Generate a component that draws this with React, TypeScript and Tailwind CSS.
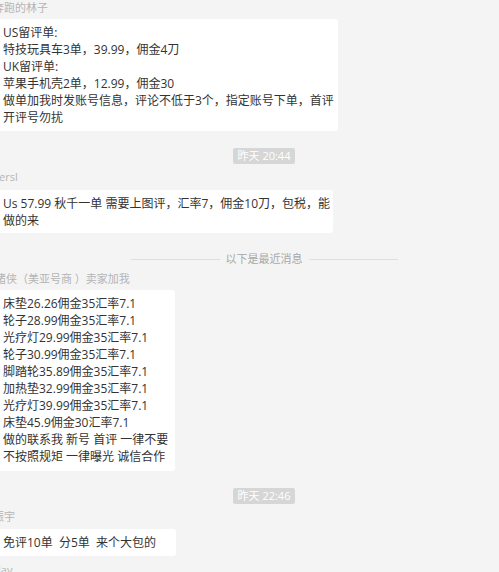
import React from "react";

const font = { fontFamily: '"Open Sans", "Noto Sans CJK SC", sans-serif' };

function Name({ children, className = "" }: { children: React.ReactNode; className?: string }) {
  return (
    <div className={`h-4 text-[11px] leading-4 text-[#b4b4b4] whitespace-nowrap ${className}`}>{children}</div>
  );
}

function Bubble({ lines, className = "" }: { lines: string[]; className?: string }) {
  return (
    <div className={`bg-white rounded-r-[3px] pl-[3px] text-[12px] leading-[17px] text-[#333] whitespace-pre ${className}`}>
      {lines.map((l, i) => (
        <div key={i}>{l}</div>
      ))}
    </div>
  );
}

function Stamp({ text, className = "" }: { text: string; className?: string }) {
  return (
    <div className={`flex justify-center w-[528px] ${className}`}>
      <div className="h-4 w-[62px] bg-[#d6d6d6] rounded-[2px] text-[11px] leading-4 text-white text-center">{text}</div>
    </div>
  );
}

export default function App() {
  return (
    <div className="w-[499px] h-[572px] overflow-hidden bg-[#f4f4f4]" style={font}>
      <Name className="-ml-[7px]">奔跑的林子</Name>
      <Bubble
        className="mt-[3px] w-[338px] pt-[5px] pb-[5px]"
        lines={[
          "US留评单:",
          "特技玩具车3单，39.99，佣金4刀",
          "UK留评单:",
          "苹果手机壳2单，12.99，佣金30",
          "做单加我时发账号信息，评论不低于3个，指定账号下单，首评",
          "开评号勿扰",
        ]}
      />
      <Stamp text="昨天 20:44" className="mt-[17px]" />
      <Name className="mt-[5px] -ml-[1px]">ersl</Name>
      <Bubble
        className="mt-[5px] w-[333px] pt-[5px] pb-[4px]"
        lines={["Us 57.99 秋千一单 需要上图评，汇率7，佣金10刀，包税，能", "做的来"]}
      />
      <div className="mt-[18px] h-4 w-[528px] flex items-center justify-center gap-[6px]">
        <div className="h-px w-[89px] bg-[#dedede]" />
        <div className="text-[11px] leading-4 text-[#a8a8a8]">以下是最近消息</div>
        <div className="h-px w-[89px] bg-[#dedede]" />
      </div>
      <Name className="mt-[4px] -ml-[5px]">猪侠（美亚号商 ）卖家加我</Name>
      <Bubble
        className="mt-[3px] w-[175px] pt-[5px] pb-[6px]"
        lines={[
          "床垫26.26佣金35汇率7.1",
          "轮子28.99佣金35汇率7.1",
          "光疗灯29.99佣金35汇率7.1",
          "轮子30.99佣金35汇率7.1",
          "脚踏轮35.89佣金35汇率7.1",
          "加热垫32.99佣金35汇率7.1",
          "光疗灯39.99佣金35汇率7.1",
          "床垫45.9佣金30汇率7.1",
          "做的联系我 新号 首评 一律不要",
          "不按照规矩 一律曝光 诚信合作",
        ]}
      />
      <Stamp text="昨天 22:46" className="mt-[17px]" />
      <Name className="mt-[5px] -ml-[7px]">振宇</Name>
      <Bubble className="mt-[4px] w-[176px] py-[5px]" lines={["免评10单  分5单  来个大包的"]} />
      <Name className="mt-[6px] -ml-[2px]">lay</Name>
    </div>
  );
}
